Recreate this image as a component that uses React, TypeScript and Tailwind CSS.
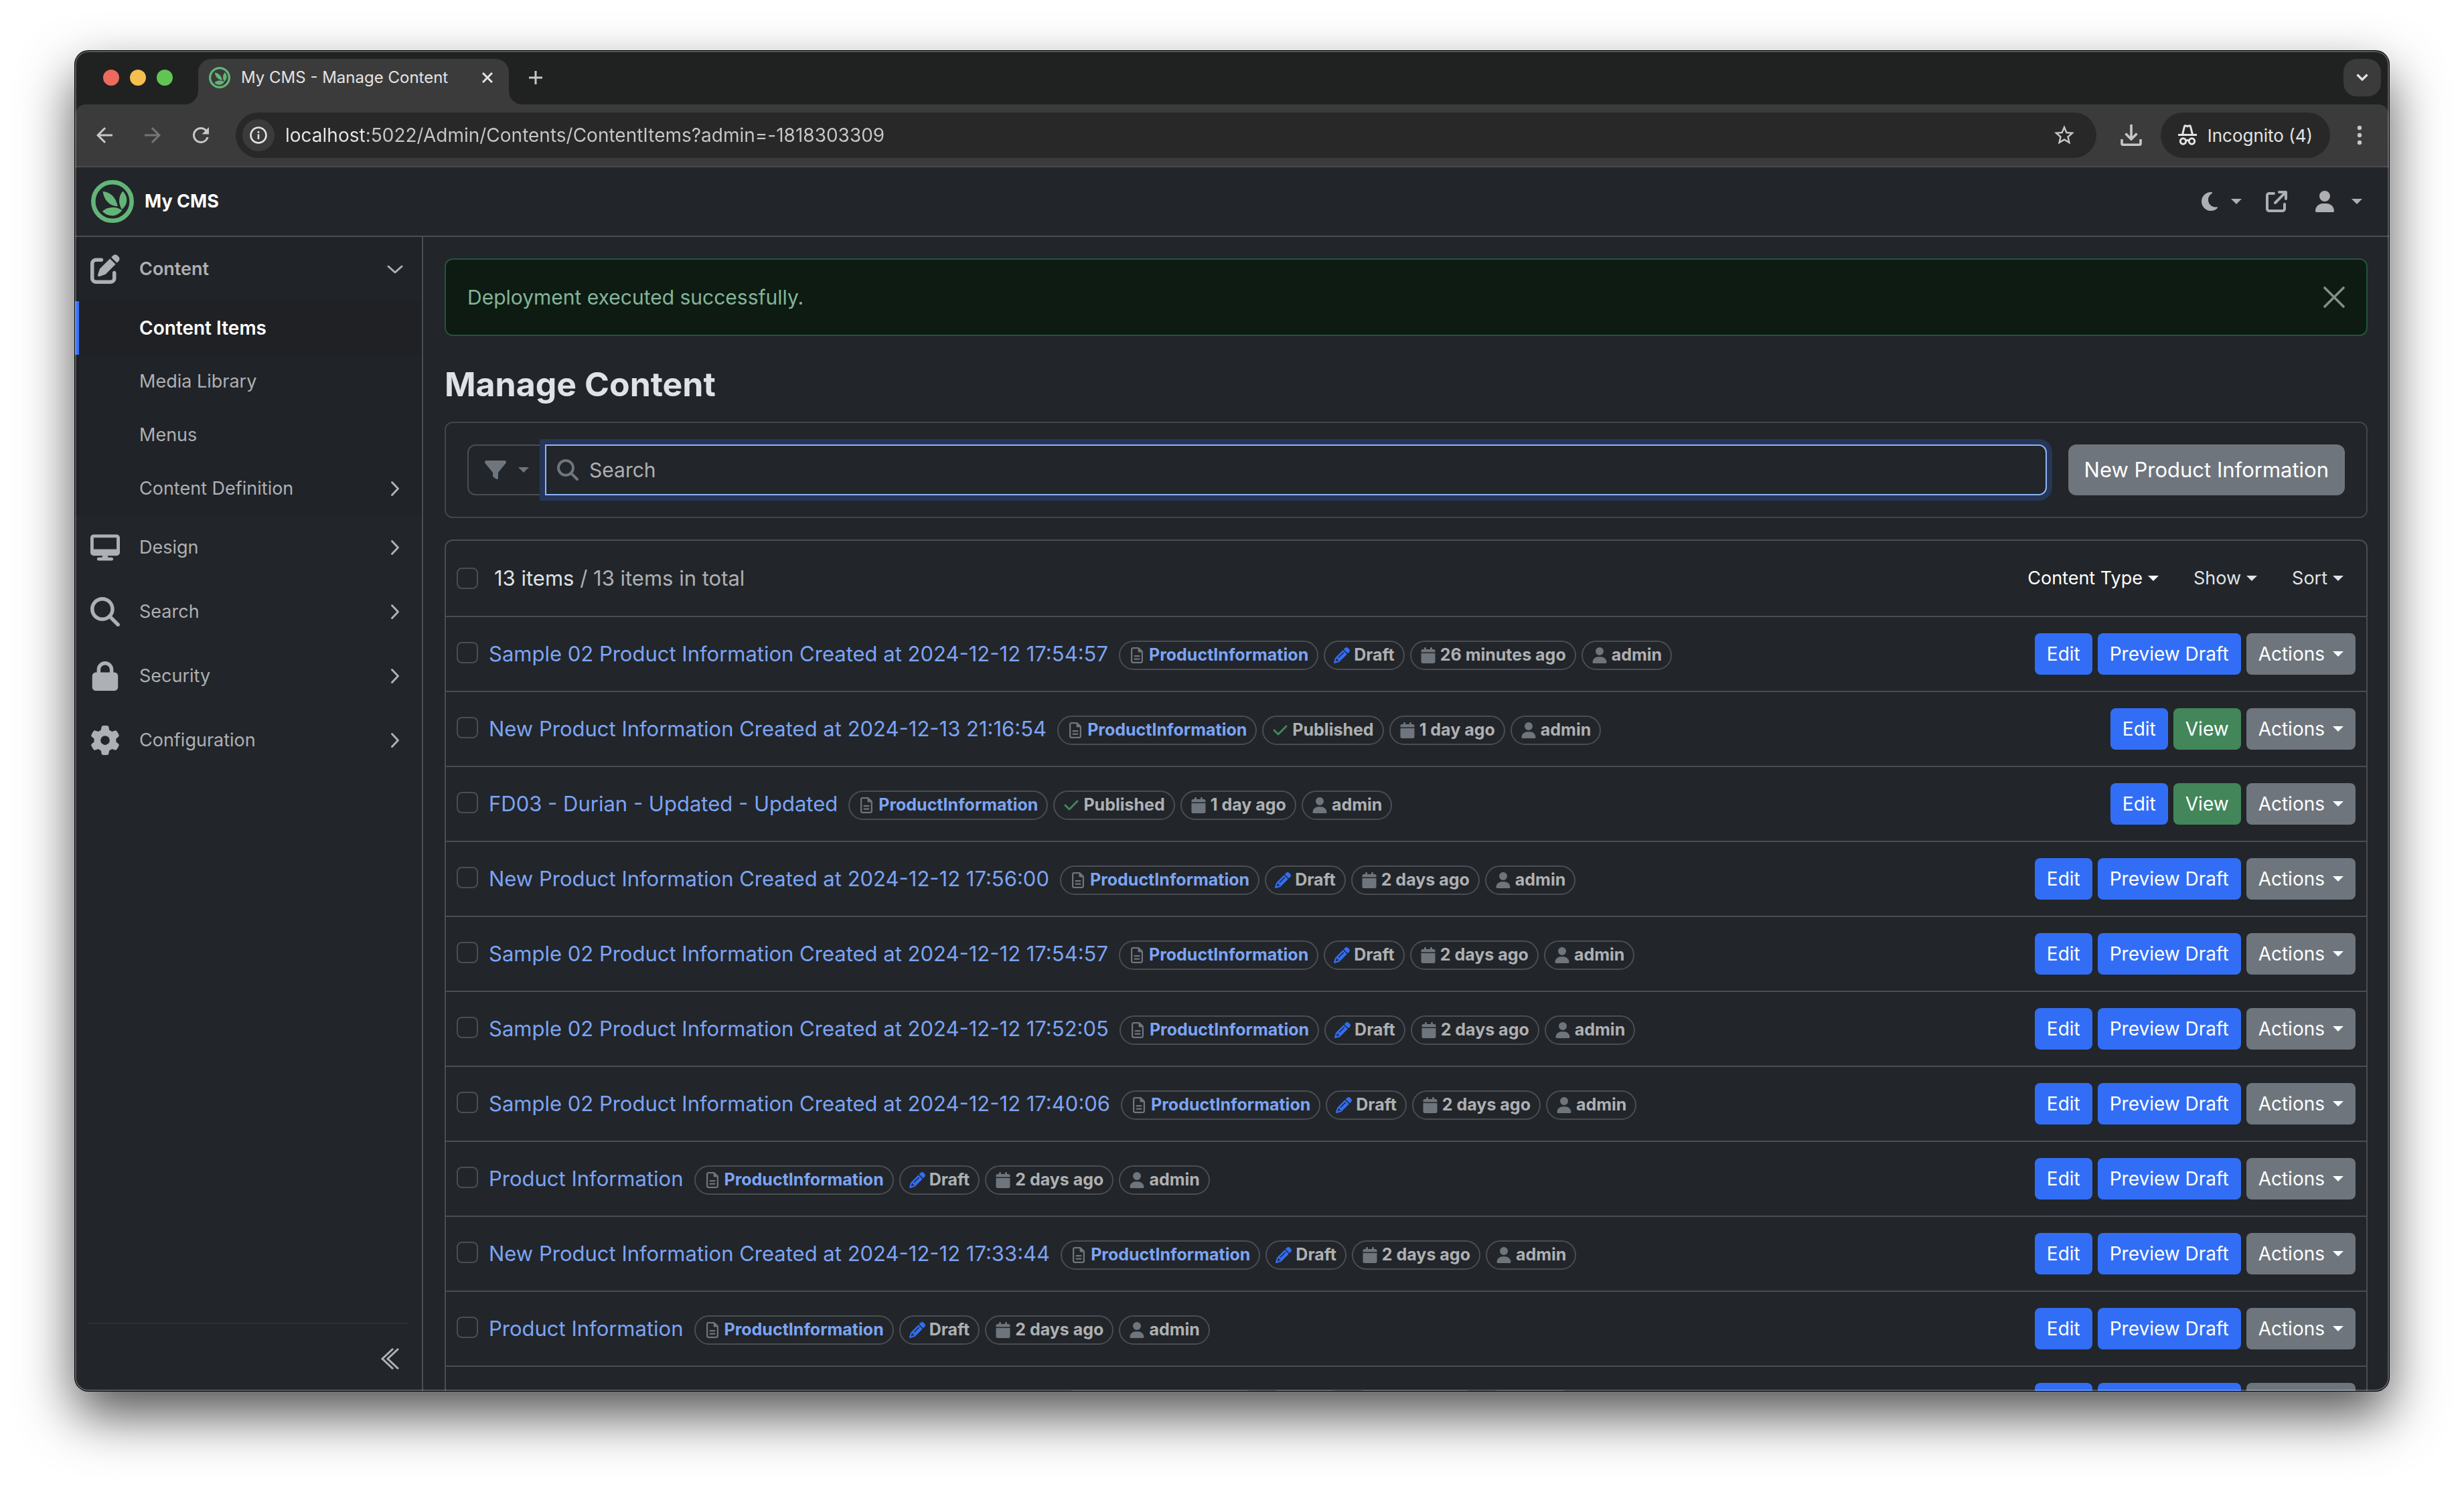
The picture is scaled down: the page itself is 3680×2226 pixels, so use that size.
import type { ReactNode } from "react";
import {
  FaArrowUpRightFromSquare,
  FaCalendar,
  FaCheck,
  FaDesktop,
  FaFilter,
  FaGear,
  FaLock,
  FaMagnifyingGlass,
  FaMoon,
  FaPencil,
  FaPenToSquare,
  FaRegFileLines,
  FaUser,
} from "react-icons/fa6";
import { MdArrowBack, MdArrowForward, MdRefresh, MdStarBorder } from "react-icons/md";

type Item = { title: string; published?: boolean; age: string };

const items: Item[] = [
  { title: "Sample 02 Product Information Created at 2024-12-12 17:54:57", age: "26 minutes ago" },
  { title: "New Product Information Created at 2024-12-13 21:16:54", published: true, age: "1 day ago" },
  { title: "FD03 - Durian - Updated - Updated", published: true, age: "1 day ago" },
  { title: "New Product Information Created at 2024-12-12 17:56:00", age: "2 days ago" },
  { title: "Sample 02 Product Information Created at 2024-12-12 17:54:57", age: "2 days ago" },
  { title: "Sample 02 Product Information Created at 2024-12-12 17:52:05", age: "2 days ago" },
  { title: "Sample 02 Product Information Created at 2024-12-12 17:40:06", age: "2 days ago" },
  { title: "Product Information", age: "2 days ago" },
  { title: "New Product Information Created at 2024-12-12 17:33:44", age: "2 days ago" },
  { title: "Product Information", age: "2 days ago" },
  { title: "New Product Information Created at 2024-12-12 17:33:02", age: "2 days ago" },
];

function Logo({ className }: { className: string }) {
  return (
    <svg viewBox="0 0 64 64" className={className} aria-hidden="true">
      <circle cx="32" cy="32" r="28.7" fill="none" stroke="#63b577" strokeWidth="6.6" />
      <g fill="#63b577">
        <path d="M17.5 17c10.500 1 19 7 22.300 22.300C28 39 19.500 30.500 17.500 17Z" />
        <path d="M47.500 16.500c7.500 8 8.500 19-1.500 27.500-5.500-9-5.500-19.500 1.500-27.500Z" />
        <path d="M16.800 46.800c8-7.500 20-8 29.500-1.800C39 55.500 26 56 16.800 46.800Z" />
      </g>
    </svg>
  );
}

function Caret() {
  return (
    <svg viewBox="0 0 16 8" className="h-2 w-4 shrink-0" fill="currentColor" aria-hidden="true">
      <path d="M0 0h16L8 8Z" />
    </svg>
  );
}

function Chevron({ down = false }: { down?: boolean }) {
  return (
    <svg viewBox="0 0 24 24" className="ml-auto size-6" fill="none" stroke="currentColor" strokeWidth="3" strokeLinecap="round" strokeLinejoin="round" aria-hidden="true">
      <path d={down ? "M2 8l10 9L22 8" : "M7.500 2.500l9 9.500-9 9.500"} />
    </svg>
  );
}

function TabFoot({ flip = false }: { flip?: boolean }) {
  return (
    <svg viewBox="0 0 20 20" className="size-5 self-end" fill="#3b3b3b" aria-hidden="true">
      <path d={flip ? "M0 0a20 20 0 0 0 20 20H0Z" : "M20 0a20 20 0 0 1-20 20h20Z"} />
    </svg>
  );
}

function IncognitoIcon() {
  return (
    <svg viewBox="0 0 28 36" className="h-9 w-7" fill="none" stroke="currentColor" strokeWidth="3" aria-hidden="true">
      <path d="M0 17.500h28M6.500 17l3-12c.5-1.500 1.500-1.500 2.500-1l2 .8 2-.8c1-.5 2-.5 2.500 1l3 12" />
      <circle cx="7.500" cy="27" r="4.200" />
      <circle cx="20.500" cy="27" r="4.200" />
      <path d="M11.500 26.500c1.500-1.200 3.500-1.200 5 0" />
    </svg>
  );
}

function Browser({ children }: { children: ReactNode }) {
  return (
    <div className="relative flex min-h-0 flex-1 flex-col overflow-hidden rounded-[20px] bg-[#202221] shadow-[0_0_0_1px_#000,0_36px_80px_rgba(0,0,0,0.68)]">
      <div className="flex h-20 shrink-0 items-center pr-3 pl-[42px]">
        <div className="flex gap-4">
          <button type="button" aria-label="Close window" className="size-6 rounded-full bg-[#ed6a5e]" />
          <button type="button" aria-label="Minimize window" className="size-6 rounded-full bg-[#f4bf4f]" />
          <button type="button" aria-label="Zoom window" className="size-6 rounded-full bg-[#61c554]" />
        </div>
        <div className="ml-[18px] flex h-full">
          <TabFoot />
          <div className="flex h-[68px] w-[464px] items-center self-end rounded-t-[20px] bg-[#3b3b3b] pr-6 pb-3 pl-4">
            <Logo className="size-8" />
            <span className="ml-4 text-2xl text-[#e3e3e3]">My CMS - Manage Content</span>
            <button type="button" aria-label="Close tab" className="ml-auto text-[#e3e3e3]">
              <svg viewBox="0 0 16 16" className="size-4" stroke="currentColor" strokeWidth="3">
                <path d="M1 1l14 14M15 1 1 15" />
              </svg>
            </button>
          </div>
          <TabFoot flip />
        </div>
        <button type="button" aria-label="New tab" className="ml-2.5 text-[#c7c7c7]">
          <svg viewBox="0 0 20 20" className="size-5" stroke="currentColor" strokeWidth="3">
            <path d="M10 0v20M0 10h20" />
          </svg>
        </button>
        <button type="button" aria-label="Search tabs" className="ml-auto flex size-14 items-center justify-center rounded-[20px] bg-[#3b3b3b] text-[#e3e3e3]">
          <svg viewBox="0 0 18 12" className="h-3 w-[18px]" fill="none" stroke="currentColor" strokeWidth="3.200">
            <path d="M1.500 1.500 9 9l7.500-7.500" />
          </svg>
        </button>
      </div>

      <div className="flex h-[94px] shrink-0 items-center rounded-t-2xl border-b-2 border-[#4a4a4a] bg-[#3b3b3b] px-6 text-[#c7c7c7]">
        <div className="mr-8 flex gap-8">
          <button type="button" aria-label="Back" className="flex size-10 items-center justify-center">
            <MdArrowBack className="size-9" />
          </button>
          <button type="button" aria-label="Forward" className="flex size-10 items-center justify-center text-[#757575]">
            <MdArrowForward className="size-9" />
          </button>
          <button type="button" aria-label="Reload" className="flex size-10 items-center justify-center">
            <MdRefresh className="size-9" />
          </button>
        </div>
        <div className="flex h-[68px] flex-1 items-center rounded-full bg-[#282828] pr-7 pl-2.5">
          <button type="button" aria-label="View site information" className="flex size-12 items-center justify-center rounded-full bg-[#3b3b3b] text-[#e3e3e3]">
            <svg viewBox="0 0 26 26" className="size-[26px]" fill="none" stroke="currentColor" strokeWidth="2.600">
              <circle cx="13" cy="13" r="11.500" />
              <path d="M13 11.500v7.500M13 7v2.800" />
            </svg>
          </button>
          <input
            aria-label="Address"
            defaultValue="localhost:5022/Admin/Contents/ContentItems?admin=-1818303309"
            className="ml-4 min-w-0 flex-1 bg-[linear-gradient(90deg,#e8e8e8_122px,#c7c7c7_122px)] bg-clip-text text-[28px] text-transparent outline-none"
          />
          <button type="button" aria-label="Bookmark this tab" className="flex size-10 items-center justify-center">
            <MdStarBorder className="size-9" />
          </button>
        </div>
        <button type="button" aria-label="Downloads" className="ml-8 flex size-10 items-center justify-center">
          <svg viewBox="0 0 32 32" className="size-8" fill="none" stroke="currentColor" strokeWidth="3.600">
            <path d="M16 0v21M7.500 13.500 16 22l8.500-8.500M2 22v6.500c0 1 .7 1.700 1.700 1.700h24.600c1 0 1.700-.7 1.700-1.700V22" />
          </svg>
        </button>
        <button type="button" className="ml-6 flex h-[68px] items-center gap-4 rounded-full bg-[#282828] px-[26px] text-[26px] text-[#e3e3e3]">
          <IncognitoIcon />
          Incognito (4)
        </button>
        <button type="button" aria-label="Menu" className="ml-6 flex size-10 items-center justify-center">
          <svg viewBox="0 0 8 30" className="h-[30px] w-2" fill="currentColor">
            <circle cx="4" cy="4" r="3.200" />
            <circle cx="4" cy="15" r="3.200" />
            <circle cx="4" cy="26" r="3.200" />
          </svg>
        </button>
      </div>
      {children}
      <div className="pointer-events-none absolute inset-0 rounded-[20px] border-2 border-white/25" />
    </div>
  );
}

function TopBar() {
  return (
    <header className="flex h-[104px] shrink-0 items-center border-b-2 border-[#4a4d52] bg-[#222529] pr-10 pl-6 text-[#adafb2]">
      <a href="#home" className="flex items-center gap-4 text-[27px] font-bold text-white">
        <Logo className="size-16" />
        My CMS
      </a>
      <button type="button" aria-label="Theme" className="ml-auto flex items-center gap-4">
        <FaMoon className="h-8 w-auto" />
        <Caret />
      </button>
      <a href="#site" aria-label="Visit site" className="ml-9">
        <FaArrowUpRightFromSquare className="size-8" />
      </a>
      <button type="button" aria-label="User menu" className="ml-10 flex items-center gap-6">
        <FaUser className="h-8 w-auto" />
        <Caret />
      </button>
    </header>
  );
}

function MenuEntry({ icon, label, open = false }: { icon: ReactNode; label: string; open?: boolean }) {
  return (
    <a href={"#" + label} className={open ? "flex h-24 items-center gap-[26px] pr-7 pl-5 font-semibold" : "flex h-24 items-center gap-[26px] pr-7 pl-5"}>
      <span className="flex w-[50px] justify-center">{icon}</span>
      {label}
      <Chevron down={open} />
    </a>
  );
}

function Sidebar() {
  return (
    <nav className="flex w-[520px] shrink-0 flex-col border-r-2 border-[#4a4d52] text-[27px] text-[#adb0b4]">
      <div className="bg-[#202327] shadow-[inset_6px_0_0_#1d1f22]">
        <MenuEntry icon={<FaPenToSquare className="h-11 w-auto" />} label="Content" open />
        <a href="#items" aria-current="page" className="flex h-20 items-center bg-[#202124] pl-24 text-[28px] font-semibold text-white shadow-[inset_6px_0_0_#3a72f8]">
          Content Items
        </a>
        <a href="#media" className="flex h-20 items-center pl-24">Media Library</a>
        <a href="#menus" className="flex h-20 items-center pl-24">Menus</a>
        <a href="#definition" className="flex h-20 items-center pr-7 pl-24">
          Content Definition
          <Chevron />
        </a>
      </div>
      <MenuEntry icon={<FaDesktop className="h-11 w-auto" />} label="Design" />
      <MenuEntry icon={<FaMagnifyingGlass className="h-11 w-auto" />} label="Search" />
      <MenuEntry icon={<FaLock className="h-11 w-auto" />} label="Security" />
      <MenuEntry icon={<FaGear className="h-11 w-auto" />} label="Configuration" />
      <div className="mx-5 mt-auto flex h-[102px] items-center justify-end border-t-2 border-[#2f3032] pt-1 pr-3.5">
        <button type="button" aria-label="Collapse menu">
          <svg viewBox="0 0 28 32" className="h-8 w-7" fill="none" stroke="currentColor" strokeWidth="3">
            <path d="M19 1 3 16l16 15M27 1 11 16l16 15" />
          </svg>
        </button>
      </div>
    </nav>
  );
}

function Badge({ icon, children, link = false }: { icon: ReactNode; children: ReactNode; link?: boolean }) {
  return (
    <span className="flex h-11 items-center gap-1.5 rounded-full border-2 border-[#4a4d52] px-[13px] text-[25px] font-bold whitespace-nowrap text-[#adb0b3]">
      <span className="text-[#6e757c]">{icon}</span>
      <span className={link ? "text-[#7ba4f4]" : ""}>{children}</span>
    </span>
  );
}

const actionBase = "flex h-[62px] items-center rounded-lg px-[18px] text-[28px] text-white";

function Row({ item }: { item: Item }) {
  return (
    <li className="flex h-28 items-center justify-between border-b-2 border-[#4a4d52] pr-4 pl-4">
      <div className="flex items-center">
        <input type="checkbox" aria-label={"Select " + item.title} className="mr-4 mb-1 size-8 appearance-none rounded-lg border-2 border-[#4a4d52]" />
        <a href="#item" className="text-[31px] whitespace-nowrap text-[#7ba4f4]">{item.title}</a>
        <div className="mt-1 ml-4 flex gap-2">
          <Badge icon={<FaRegFileLines className="h-6 w-auto" />} link>ProductInformation</Badge>
          {item.published ? (
            <Badge icon={<FaCheck className="h-6 w-auto text-[#42865a]" />}>Published</Badge>
          ) : (
            <Badge icon={<FaPencil className="h-6 w-auto text-[#326ef5]" />}>Draft</Badge>
          )}
          <Badge icon={<FaCalendar className="h-6 w-auto" />}>{item.age}</Badge>
          <Badge icon={<FaUser className="h-6 w-auto" />}>admin</Badge>
        </div>
      </div>
      <div className="flex gap-2">
        <button type="button" className={actionBase + " bg-[#326ef5]"}>Edit</button>
        {item.published ? (
          <button type="button" className={actionBase + " bg-[#42865a]"}>View</button>
        ) : (
          <button type="button" className={actionBase + " bg-[#326ef5]"}>Preview Draft</button>
        )}
        <button type="button" className={actionBase + " gap-3 bg-[#6e757c]"}>
          Actions
          <Caret />
        </button>
      </div>
    </li>
  );
}

function Content() {
  return (
    <main className="min-w-0 flex-1 overflow-hidden p-8">
      <div role="alert" className="flex h-[116px] items-center justify-between rounded-xl border-2 border-[#24533a] bg-[#0d1b12] px-8 text-[30px] text-[#84b49a]">
        Deployment executed successfully.
        <button type="button" aria-label="Dismiss" className="text-[#868d88]">
          <svg viewBox="0 0 32 32" className="size-8" stroke="currentColor" strokeWidth="3.600" strokeLinecap="round">
            <path d="M2 2l28 28M30 2 2 30" />
          </svg>
        </button>
      </div>

      <h1 className="mt-10 mb-6 text-[50px] leading-[64px] font-bold text-[#dfe2e6]">Manage Content</h1>

      <div className="flex gap-8 rounded-xl border-2 border-[#434548] p-8">
        <div className="flex h-[76px] flex-1">
          <button type="button" aria-label="Filter" className="flex items-center gap-[18px] rounded-l-xl border-y-2 border-l-2 border-[#4a4d52] px-6 text-[#6e757c]">
            <FaFilter className="size-8" />
            <Caret />
          </button>
          <label className="relative flex flex-1 items-center gap-4 rounded-r-xl border-2 border-[#8eb5f8] bg-[#222529] px-4 shadow-[0_0_0_8px_#253659]">
            <FaMagnifyingGlass className="size-8 text-[#6e757c]" />
            <input type="text" aria-label="Search content" placeholder="Search" className="h-12 min-w-0 flex-1 bg-transparent text-[30px] text-[#dfe2e6] outline-none placeholder:text-[#adb0b4]" />
          </label>
        </div>
        <button type="button" className="rounded-xl bg-[#6e757c] px-6 text-[31px] text-white">New Product Information</button>
      </div>

      <ul className="mt-8 rounded-xl border-2 border-[#4a4d52]">
        <li className="flex h-[114px] items-center border-b-2 border-[#4a4d52] pr-[34px] pl-4">
          <label className="flex items-center gap-6 text-[31px] whitespace-pre text-[#adb0b4]">
            <input type="checkbox" className="size-8 appearance-none rounded-lg border-2 border-[#4a4d52]" />
            <span>
              <span className="text-[#dfe2e6]">13 items</span> / 13 items in total
            </span>
          </label>
          <div className="ml-auto flex gap-[52px] text-[27px] text-[#dfe2e6]">
            <button type="button" className="flex items-center gap-2 text-white">Content Type <Caret /></button>
            <button type="button" className="flex items-center gap-2">Show <Caret /></button>
            <button type="button" className="flex items-center gap-2">Sort <Caret /></button>
          </div>
        </li>
        {items.map((item, i) => (
          <Row key={i} item={item} />
        ))}
      </ul>
    </main>
  );
}

export default function App() {
  return (
    <div className="flex h-screen flex-col bg-white px-28 pt-[76px] pb-[148px] font-['Inter',sans-serif]">
      <Browser>
        <div className="flex min-h-0 flex-1 flex-col bg-[#222529]">
          <TopBar />
          <div className="flex min-h-0 flex-1">
            <Sidebar />
            <Content />
          </div>
        </div>
      </Browser>
    </div>
  );
}
